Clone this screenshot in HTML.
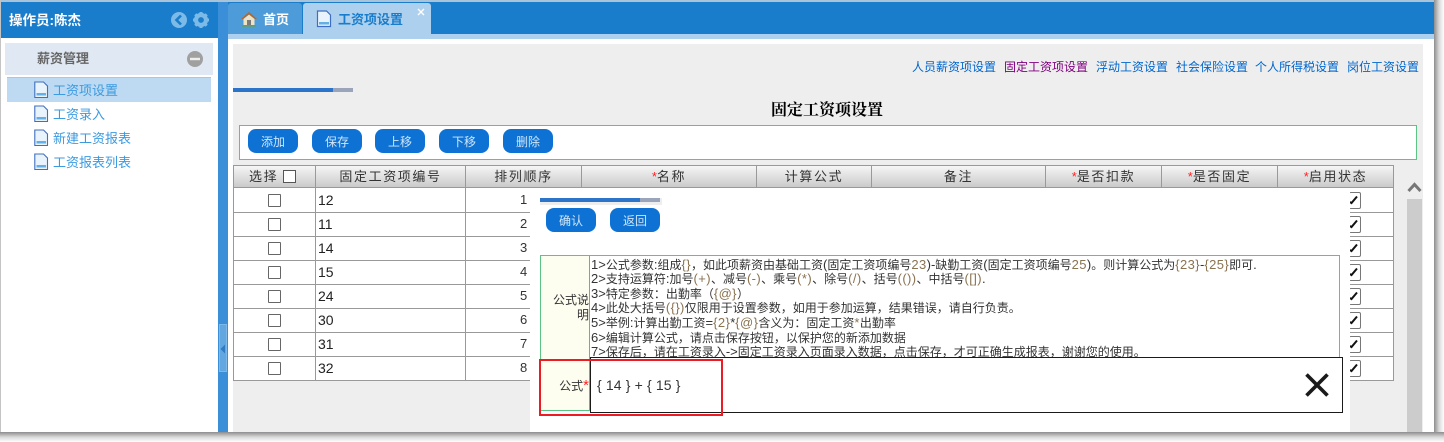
<!DOCTYPE html>
<html><head><meta charset="utf-8">
<style>
html,body{margin:0;padding:0;background:#fff}
#p{position:relative;width:1444px;height:442px;overflow:hidden;background:#fff;font-family:"Liberation Sans","WenQuanYi Zen Hei","Noto Sans CJK SC",sans-serif;font-size:13px;color:#333}
#p div,#p span.a,#p svg{position:absolute}
.t{position:absolute;white-space:nowrap;line-height:16px}
.btn{background:#0e72d4;border-radius:8px;color:#cfe6fa;width:50px;height:24px;line-height:26px;text-align:center;font-size:12px}
.side{left:53px;color:#3b9ae0;font-size:14px;white-space:nowrap;line-height:16px}
.lnk{top:59px;color:#0066cc;font-size:12px;line-height:16px;white-space:nowrap}
.th{top:165px;height:23px;line-height:21px;text-align:center;background:linear-gradient(#f6f6f6,#cacaca);border-right:1px solid #999;border-top:1px solid #999;border-bottom:1px solid #999;box-sizing:border-box;color:#333;letter-spacing:1.6px;font-size:13px;white-space:nowrap}
.th i{color:#f22;font-style:normal;letter-spacing:0}
.hl{left:233px;width:1161px;height:1px;background:#999}
.vl{top:188px;height:193px;width:1px;background:#999}
.cb{left:268px;width:11px;height:11px;border:1px solid #666;background:#fff;border-radius:1px}
.n{left:318px;font-size:14px;color:#222;line-height:16px}
.o{left:520px;font-size:13px;color:#333;line-height:16px}
.ck{left:1349px;width:11px;height:15px;border:1px solid #777;border-left:0;background:#fff;border-radius:2px}
.ln{position:absolute;left:591px;font-size:12px;color:#333;white-space:nowrap;line-height:15px}
.ln em{font-style:normal;font-size:13px}
.ln b{font-weight:normal;font-size:13px;color:#8a7350;letter-spacing:.4px}
</style></head><body>
<div id="p">
<!-- window shadow -->
<div style="left:0;top:0;width:1444px;height:2px;background:#a9c3d8"></div>
<div style="left:1434px;top:0;width:10px;height:442px;background:linear-gradient(90deg,#8d8d8d,#d8d8d8 50%,#fff)"></div>
<div style="left:0;top:432px;width:1444px;height:10px;background:linear-gradient(#8d8d8d,#d8d8d8 50%,#fff)"></div>
<div style="left:0;top:0;width:1px;height:432px;background:#c4c4c4"></div>

<!-- top bar -->
<div style="left:1px;top:2px;width:1433px;height:32px;background:#1a7dcb"></div>
<div style="left:1px;top:34px;width:217px;height:4px;background:#1a7dcb"></div>
<div style="left:228px;top:34px;width:1206px;height:5px;background:#acd0ee"></div>
<div style="left:218px;top:2px;width:10px;height:430px;background:#3a8fd8"></div>
<div class="t" style="left:9px;top:13px;color:#fff;font-weight:bold;font-size:13.5px">操作员:陈杰</div>
<svg style="left:170px;top:11px" width="48" height="18" viewBox="0 0 48 18"><circle cx="9" cy="9" r="8" fill="#7cbae8"/><path d="M11 4.5 L6.5 9 L11 13.5" fill="none" stroke="#1a7dcb" stroke-width="2.6"/><circle cx="31" cy="9" r="5" fill="none" stroke="#7cbae8" stroke-width="4.2"/><g stroke="#7cbae8" stroke-width="3"><path d="M31 1v3M31 14v3M23 9h3M36 9h3M25.3 3.3l2.2 2.2M34.5 12.5l2.2 2.2M25.3 14.7l2.2-2.2M34.5 5.5l2.2-2.2"/></g></svg>

<!-- tabs -->
<div style="left:228px;top:3px;width:74px;height:31px;background:#4d9bd8;border-radius:3px 3px 0 0"></div>
<svg style="left:240px;top:11px" width="18" height="16" viewBox="0 0 18 16"><path d="M1 8 L9 1 L17 8 L15 8 L9 3.4 L3 8Z" fill="#b5672a"/><path d="M3.5 8 L9 3.6 L14.5 8 V14 H3.5Z" fill="#efe3c6"/><rect x="7" y="9" width="4" height="5" fill="#7b7b7b"/><rect x="2" y="14" width="14" height="1.5" fill="#6aa33a"/></svg>
<div class="t" style="left:263px;top:12px;color:#fff;font-weight:bold;font-size:13px">首页</div>
<div style="left:303px;top:3px;width:128px;height:32px;background:#acd0ee;border-radius:3px 3px 0 0"></div>
<svg style="left:316px;top:10px" width="16" height="18" viewBox="0 0 16 18"><path d="M1.5 1 H10.5 L14.5 5 V16.5 H1.5Z" fill="#e9f3fb" stroke="#3f6fc0" stroke-width="1.2"/><rect x="3" y="12" width="10" height="2.5" fill="#62b0e6"/></svg>
<div class="t" style="left:338px;top:12px;color:#1a7dcb;font-weight:bold;font-size:13px">工资项设置</div>
<svg style="left:417px;top:8px" width="8" height="8" viewBox="0 0 8 8"><path d="M1 1 L7 7 M7 1 L1 7" stroke="#fff" stroke-width="1.4" fill="none"/></svg>

<!-- sidebar -->
<div style="left:5px;top:43px;width:208px;height:32px;background:#e0e9f3"></div>
<div class="t" style="left:37px;top:51px;color:#666;font-weight:bold;font-size:13px">薪资管理</div>
<svg style="left:187px;top:51px" width="16" height="16" viewBox="0 0 16 16"><circle cx="8" cy="8" r="8" fill="#a0a0a0"/><rect x="3" y="6.8" width="10" height="2.4" fill="#eee"/></svg>
<div style="left:7px;top:77px;width:204px;height:25px;background:#bddaf2;border-top:1px solid #b4c4d2;box-sizing:border-box"></div>
<svg style="left:34px;top:81px" width="15" height="90" viewBox="0 0 15 90"><g id="g" fill="#e9f3fb" stroke="#3f6fc0" stroke-width="1.1"><path d="M.8 1 H9.5 L13.5 5 V16.5 H.8Z"/><path d="M.8 25 H9.5 L13.5 29 V40.5 H.8Z"/><path d="M.8 49 H9.5 L13.5 53 V64.5 H.8Z"/><path d="M.8 73 H9.5 L13.5 77 V88.5 H.8Z"/></g><g fill="#62b0e6"><rect x="2.5" y="12" width="9.5" height="2.5"/><rect x="2.5" y="36" width="9.5" height="2.5"/><rect x="2.5" y="60" width="9.5" height="2.5"/><rect x="2.5" y="84" width="9.5" height="2.5"/></g></svg>
<div class="side" style="top:83px;font-size:13px">工资项设置</div>
<div class="side" style="top:107px;font-size:13px">工资录入</div>
<div class="side" style="top:131px;font-size:13px">新建工资报表</div>
<div class="side" style="top:155px;font-size:13px">工资报表列表</div>

<!-- splitter handle -->
<div style="left:219px;top:324px;width:8px;height:48px;background:#62a7e0;border:1px solid #7db8e8;box-sizing:border-box"></div>
<svg style="left:220px;top:344px" width="6" height="10" viewBox="0 0 6 10"><path d="M5 0.5 L0.5 5 L5 9.5Z" fill="#2f7cc4"/></svg>

<!-- content -->
<div style="left:233px;top:44px;width:1190px;height:388px;background:#eee"></div>
<div class="lnk" style="left:912px">人员薪资项设置</div>
<div class="lnk" style="left:1004px;color:#800080">固定工资项设置</div>
<div class="lnk" style="left:1096px">浮动工资设置</div>
<div class="lnk" style="left:1176px">社会保险设置</div>
<div class="lnk" style="left:1255px">个人所得税设置</div>
<div class="lnk" style="left:1347px">岗位工资设置</div>
<div style="left:233px;top:88px;width:100px;height:4px;background:#2b74c9"></div>
<div style="left:333px;top:88px;width:20px;height:4px;background:#9aa5bb"></div>
<div class="t" style="left:771px;top:103px;color:#000;font-weight:bold;font-size:16px;font-family:'Liberation Serif','Noto Serif CJK SC',serif">固定工资项设置</div>

<div style="left:239px;top:125px;width:1178px;height:35px;background:#fff;border:1px solid #5dc487;box-sizing:border-box"></div>
<div class="btn" style="left:248px;top:129px">添加</div>
<div class="btn" style="left:312px;top:129px">保存</div>
<div class="btn" style="left:375px;top:129px">上移</div>
<div class="btn" style="left:439px;top:129px">下移</div>
<div class="btn" style="left:503px;top:129px">删除</div>

<!-- table -->
<div style="left:233px;top:188px;width:1161px;height:193px;background:#fff"></div>
<div class="th" style="left:233px;width:83px;border-left:1px solid #999;text-align:left;padding-left:15px">选择</div>
<div style="left:283px;top:170px;width:11px;height:11px;border:1px solid #555;background:#fff"></div>
<div class="th" style="left:316px;width:150px">固定工资项编号</div>
<div class="th" style="left:466px;width:116px">排列顺序</div>
<div class="th" style="left:582px;width:175px"><i>*</i>名称</div>
<div class="th" style="left:757px;width:115px">计算公式</div>
<div class="th" style="left:872px;width:174px">备注</div>
<div class="th" style="left:1046px;width:116px"><i>*</i>是否扣款</div>
<div class="th" style="left:1162px;width:116px"><i>*</i>是否固定</div>
<div class="th" style="left:1278px;width:116px"><i>*</i>启用状态</div>

<div class="vl" style="left:233px"></div><div class="vl" style="left:315px"></div><div class="vl" style="left:465px"></div><div class="vl" style="left:581px"></div><div class="vl" style="left:1393px"></div>
<div class="hl" style="top:212px"></div><div class="hl" style="top:236px"></div><div class="hl" style="top:260px"></div><div class="hl" style="top:284px"></div><div class="hl" style="top:308px"></div><div class="hl" style="top:332px"></div><div class="hl" style="top:356px"></div><div class="hl" style="top:380px"></div>

<div class="cb" style="top:194px"></div><div class="cb" style="top:218px"></div><div class="cb" style="top:242px"></div><div class="cb" style="top:266px"></div><div class="cb" style="top:290px"></div><div class="cb" style="top:314px"></div><div class="cb" style="top:338px"></div><div class="cb" style="top:362px"></div>
<div class="n" style="top:192px">12</div><div class="n" style="top:216px">11</div><div class="n" style="top:240px">14</div><div class="n" style="top:264px">15</div><div class="n" style="top:288px">24</div><div class="n" style="top:312px">30</div><div class="n" style="top:336px">31</div><div class="n" style="top:360px">32</div>
<div class="o" style="top:192px">1</div><div class="o" style="top:216px">2</div><div class="o" style="top:240px">3</div><div class="o" style="top:264px">4</div><div class="o" style="top:288px">5</div><div class="o" style="top:312px">6</div><div class="o" style="top:336px">7</div><div class="o" style="top:360px">8</div>

<div class="ck" style="top:192px"></div><div class="ck" style="top:216px"></div><div class="ck" style="top:240px"></div><div class="ck" style="top:264px"></div><div class="ck" style="top:288px"></div><div class="ck" style="top:312px"></div><div class="ck" style="top:336px"></div><div class="ck" style="top:360px"></div>
<svg style="left:1350px;top:192px" width="9" height="190" viewBox="0 0 9 190"><g fill="none" stroke="#111" stroke-width="2"><path d="M0 10 L1.5 11 L7 4.5"/><path d="M0 34 L1.5 35 L7 28.5"/><path d="M0 58 L1.5 59 L7 52.5"/><path d="M0 82 L1.5 83 L7 76.5"/><path d="M0 106 L1.5 107 L7 100.5"/><path d="M0 130 L1.5 131 L7 124.5"/><path d="M0 154 L1.5 155 L7 148.5"/><path d="M0 178 L1.5 179 L7 172.5"/></g></svg>

<!-- scrollbar -->
<svg style="left:1407px;top:181px" width="15" height="12" viewBox="0 0 15 12"><path d="M1.5 10 L7.5 3.5 L13.5 10" fill="none" stroke="#777" stroke-width="3"/></svg>
<div style="left:1407px;top:199px;width:15px;height:233px;background:#ccc"></div>

<!-- modal -->
<div style="left:530px;top:188px;width:820px;height:244px;background:#fff"></div>
<div style="left:540px;top:198px;width:122px;height:7px;background:#eee"></div>
<div style="left:540px;top:198px;width:100px;height:4px;background:#2b74c9"></div>
<div style="left:640px;top:198px;width:20px;height:4px;background:#9aa5bb"></div>
<div class="btn" style="left:546px;top:208px">确认</div>
<div class="btn" style="left:610px;top:208px">返回</div>

<div style="left:540px;top:255px;width:800px;height:156px;border:1px solid #5dc487;box-sizing:border-box;background:#fff"></div>
<div style="left:541px;top:256px;width:48px;height:154px;background:#fdfdf0;border-right:1px solid #45c878"></div>
<div class="t" style="left:541px;top:293px;width:48px;text-align:right;font-size:12px;line-height:15px;color:#333">公式说<br>明</div>
<div class="t" style="left:541px;top:378px;width:48px;text-align:right;font-size:12px;color:#333">公式<span style="color:#f22;font-size:15px;line-height:12px">*</span></div>

<div class="ln" style="top:257px"><em>1&gt;</em>公式参数<em>:</em>组成<b>{}</b>，如此项薪资由基础工资<em>(</em>固定工资项编号<b>23</b><em>)-</em>缺勤工资<em>(</em>固定工资项编号<b>25</b><em>)</em>。则计算公式为<b>{23}</b><em>-</em><b>{25}</b>即可<em>.</em></div>
<div class="ln" style="top:271px"><em>2&gt;</em>支持运算符<em>:</em>加号<b>(+)</b>、减号<b>(-)</b>、乘号<b>(*)</b>、除号<b>(/)</b>、括号<b>(())</b>、中括号<b>([])</b><em>.</em></div>
<div class="ln" style="top:286px"><em>3&gt;</em>特定参数：出勤率（<b>{@}</b>）</div>
<div class="ln" style="top:300px"><em>4&gt;</em>此处大括号<b>({})</b>仅限用于设置参数，如用于参加运算，结果错误，请自行负责。</div>
<div class="ln" style="top:315px"><em>5&gt;</em>举例<em>:</em>计算出勤工资<em>=</em><b>{2}</b><em>*</em><b>{@}</b>含义为：固定工资<b>*</b>出勤率</div>
<div class="ln" style="top:330px"><em>6&gt;</em>编辑计算公式，请点击保存按钮，以保护您的新添加数据</div>
<div class="ln" style="top:344px"><em>7&gt;</em>保存后，请在工资录入<em>-&gt;</em>固定工资录入页面录入数据，点击保存，才可正确生成报表，谢谢您的使用。</div>

<div style="left:590px;top:357px;width:753px;height:56px;background:#fff;border:1px solid #1a1a1a;box-sizing:border-box"></div>
<div class="t" style="left:597px;top:377px;font-size:14px;color:#333;letter-spacing:.15px">{ 14 } + { 15 }</div>
<svg style="left:1304px;top:372px" width="26" height="26" viewBox="0 0 26 26"><path d="M2.5 2.5 L23.5 23.5 M23.5 2.5 L2.5 23.5" stroke="#1a1a1a" stroke-width="3.6" fill="none"/></svg>
<div style="left:539px;top:359px;width:184px;height:57px;border:2px solid #ed1c24;box-sizing:border-box"></div>
</div>
</body></html>
